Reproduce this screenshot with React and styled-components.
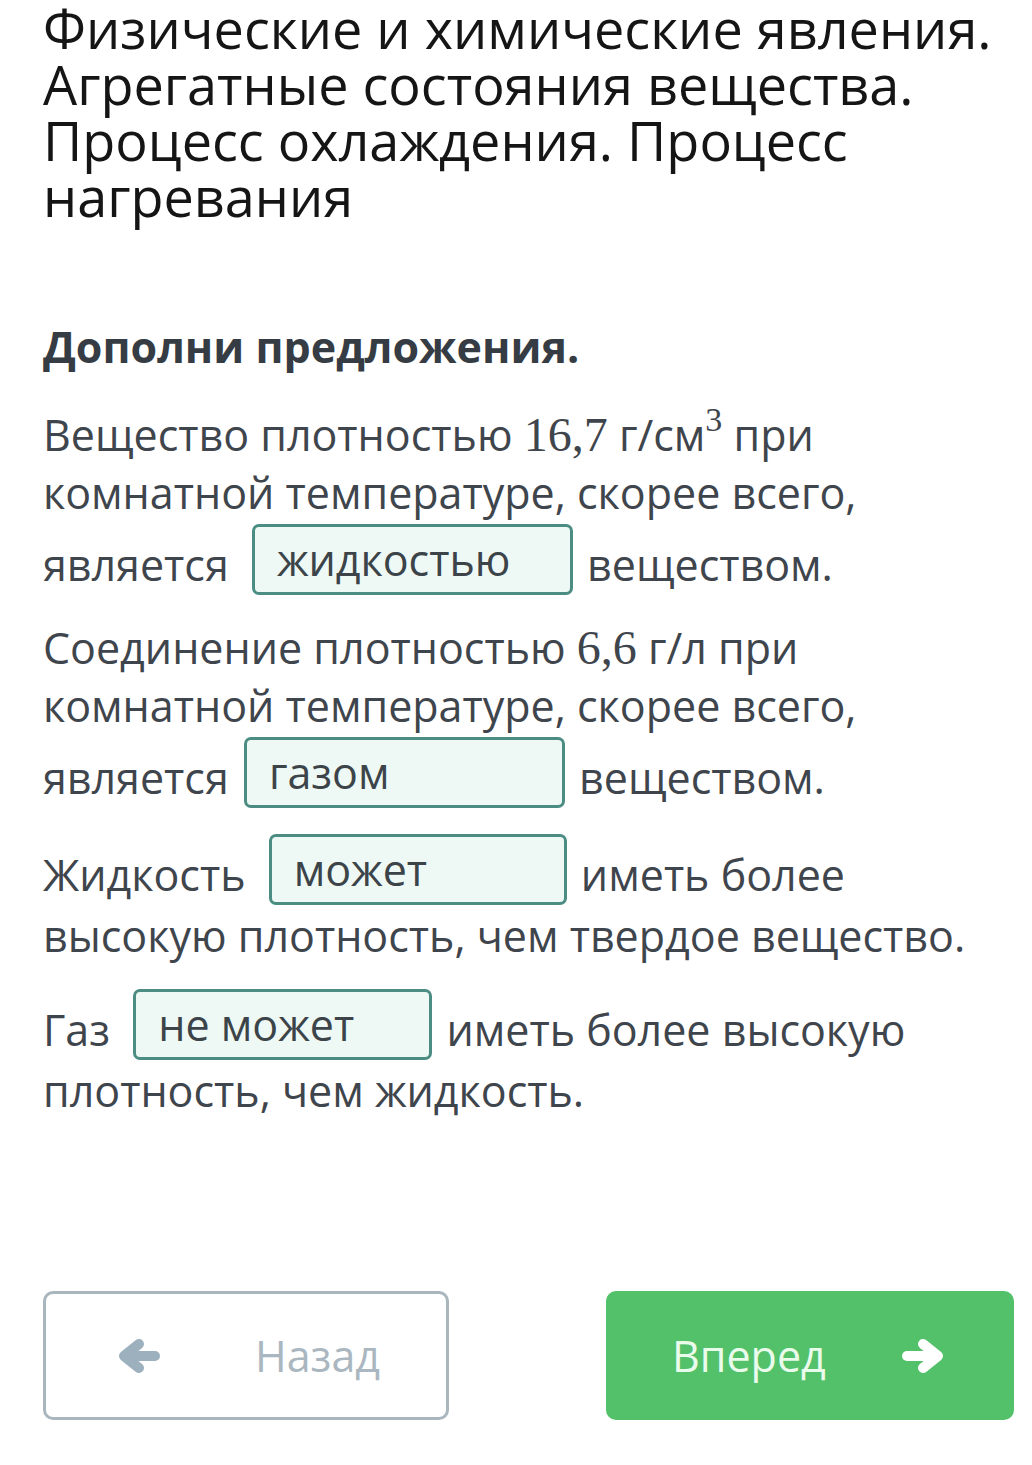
import React from 'react';
import styled, { createGlobalStyle } from 'styled-components';

const GlobalStyle = createGlobalStyle`
  html, body {
    margin: 0;
    padding: 0;
    background: #ffffff;
  }
  body {
    font-family: "Open Sans", "Noto Sans", sans-serif;
  }
`;

const Page = styled.div`
  width: 1032px;
  min-height: 1465px;
  box-sizing: border-box;
  padding: 0 18px 0 43px;
  display: flex;
  flex-direction: column;
`;

const Title = styled.h1`
  margin: 0;
  font-size: 54px;
  line-height: 56px;
  font-weight: 400;
  color: #151515;
`;

const Task = styled.h2`
  margin: 95px 0 31px;
  font-size: 43px;
  line-height: 56px;
  font-weight: 700;
  color: #363c44;
`;

const Paragraph = styled.p`
  margin: 0 0 22px;
  font-size: 43px;
  line-height: 58px;
  color: #3f454c;
`;

const Math = styled.span`
  font-family: "Liberation Serif", "DejaVu Serif", serif;
  font-size: 48px;
`;

const Sup = styled.sup`
  font-family: "Liberation Serif", "DejaVu Serif", serif;
  font-size: 34px;
  line-height: 0;
  vertical-align: 20px;
`;

const Blank = styled.span`
  display: inline-block;
  box-sizing: border-box;
  width: ${(p) => p.$width}px;
  height: 71px;
  margin: 2px 3px 2px ${(p) => (p.$wide ? 12 : 4)}px;
  padding: 4px 20px 0 22px;
  border: 3px solid #4b8c83;
  border-radius: 7px;
  background: #eef9f5;
  color: #3c4449;
  line-height: 58px;
  vertical-align: 5px;
  white-space: nowrap;
`;

const Footer = styled.div`
  margin-top: auto;
  margin-bottom: 45px;
  display: flex;
  justify-content: space-between;
`;

const NavButton = styled.button`
  box-sizing: border-box;
  width: ${(p) => p.$width}px;
  height: 129px;
  display: flex;
  align-items: center;
  justify-content: space-between;
  padding: ${(p) => p.$pad};
  border-radius: 10px;
  font-family: "Open Sans", "Noto Sans", sans-serif;
  font-size: 43px;
  cursor: pointer;
  border: 3px solid ${(p) => (p.$primary ? '#52c16a' : '#aab6be')};
  background: ${(p) => (p.$primary ? '#52c16a' : '#ffffff')};
  color: ${(p) => (p.$primary ? '#e9fbea' : '#aab7c0')};
`;

const Arrow = ({ dir, color }) => (
  <svg width="44" height="36" viewBox="0 0 44 36">
    {dir === 'left' ? (
      <g fill="none" stroke={color} strokeWidth="10" strokeLinecap="round" strokeLinejoin="round">
        <path d="M22 6 L7 18 L22 30" />
        <path d="M9 18 H38" />
      </g>
    ) : (
      <g fill="none" stroke={color} strokeWidth="10" strokeLinecap="round" strokeLinejoin="round">
        <path d="M22 6 L37 18 L22 30" />
        <path d="M35 18 H6" />
      </g>
    )}
  </svg>
);

export default function App() {
  return (
    <>
      <GlobalStyle />
      <Page>
        <Title>
          Физические и химические явления.<br />
          Агрегатные состояния вещества.<br />
          Процесс охлаждения. Процесс<br />
          нагревания
        </Title>

        <Task>Дополни предложения.</Task>

        <Paragraph>
          Вещество плотностью <Math>16,7</Math> г/см<Sup>3</Sup> при<br />
          комнатной температуре, скорее всего,<br />
          является <Blank $width={321} $wide>жидкостью</Blank> веществом.
        </Paragraph>

        <Paragraph>
          Соединение плотностью <Math>6,6</Math> г/л при<br />
          комнатной температуре, скорее всего,<br />
          является <Blank $width={321}>газом</Blank> веществом.
        </Paragraph>

        <Paragraph>
          Жидкость <Blank $width={298} $wide>может</Blank> иметь более<br />
          высокую плотность, чем твердое вещество.
        </Paragraph>

        <Paragraph>
          Газ <Blank $width={299} $wide>не может</Blank> иметь более высокую<br />
          плотность, чем жидкость.
        </Paragraph>

        <Footer>
          <NavButton $width={406} $pad="0 66px 0 71px">
            <Arrow dir="left" color="#9cb0bd" />
            <span>Назад</span>
          </NavButton>
          <NavButton $width={408} $pad="0 66px 0 63px" $primary>
            <span>Вперед</span>
            <Arrow dir="right" color="#ffffff" />
          </NavButton>
        </Footer>
      </Page>
    </>
  );
}
